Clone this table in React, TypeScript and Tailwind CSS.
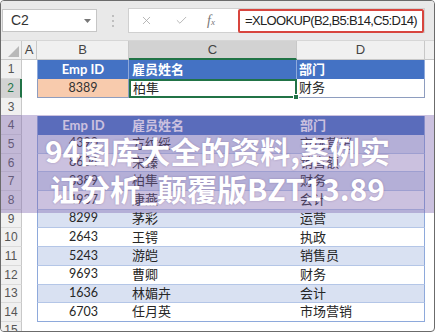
import { X, Check } from "lucide-react";

const rows = [
  ["4390", "方纹绥", "市场营销"],
  ["8604", "宋臻", "销售额"],
  ["8389", "柏隼", "财务"],
  ["4937", "康燕", "会计"],
  ["8299", "茅彩", "运营"],
  ["2643", "王锷", "执政"],
  ["5243", "游皑", "销售员"],
  ["9693", "曹卿", "财务"],
  ["1636", "林媚卉", "会计"],
  ["6703", "任月英", "市场营销"],
];

const RowNum = ({ n, selected = false }: { n: number; selected?: boolean }) =>
  selected ? (
    <div className="w-[21px] shrink-0 h-full flex items-center justify-center bg-[#d2d2d2] text-[#217346] border-r-2 border-r-[#217346] border-b border-b-[#d4d4d4] text-[12px] font-['Liberation_Sans',sans-serif]">
      {n}
    </div>
  ) : (
    <div className="w-[21px] shrink-0 h-full flex items-center justify-center bg-[#f0f0f0] text-[#555] border-r border-r-[#c8c8c8] border-b border-b-[#dadada] text-[12px] font-['Liberation_Sans',sans-serif]">
      {n}
    </div>
  );

const App = () => {
  return (
    <div className="w-[435px] h-[332px] relative overflow-hidden bg-white border border-[#6b6b6b] rounded-[4px] font-['Lato','Noto_Sans_CJK_SC',sans-serif] text-[#262626]">
      {/* formula bar */}
      <div className="h-[39px] flex items-center bg-[#e9e9e9] pl-[1px] pr-[9px]">
        <div className="w-[95px] h-[23px] bg-white border border-[#c6c6c6] flex items-center justify-between pl-[8px] pr-[5px]">
          <span className="text-[14px] text-[#333] font-['Liberation_Sans',sans-serif]">C2</span>
          <svg width="7" height="4" viewBox="0 0 7 4">
            <path d="M0 0h7L3.5 4z" fill="#777" />
          </svg>
        </div>
        <div className="w-[31px] flex justify-center">
          <svg width="2" height="12" viewBox="0 0 2 12">
            <circle cx="1" cy="1" r="0.9" fill="#aaa" />
            <circle cx="1" cy="6" r="0.9" fill="#aaa" />
            <circle cx="1" cy="11" r="0.9" fill="#aaa" />
          </svg>
        </div>
        <div className="flex-1 h-[25px] bg-white border border-[#d0d0d0] flex items-center">
          <div className="w-[109px] flex items-center pl-[11px] gap-[22px] text-[#a8a8a8]">
            <X size={13} strokeWidth={1.5} />
            <Check size={13} strokeWidth={1.5} />
            <span className="font-['Liberation_Serif',serif] italic text-[14px] text-[#777] leading-none -ml-[3px]">
              f<span className="text-[9px]">x</span>
            </span>
          </div>
          <div className="flex-1 h-[24px] border-2 border-[#d8453e] rounded-[2px] flex items-center pl-[5px] text-[13px] tracking-[-0.65px] text-[#222] font-['Liberation_Sans',sans-serif]">
            =XLOOKUP(B2,B5:B14,C5:D14)
          </div>
        </div>
      </div>

      {/* column headers */}
      <div className="flex h-[20px] bg-[#f0f0f0] border-t border-[#d6d6d6] text-[13px] text-[#444] font-['Liberation_Sans',sans-serif]">
        <div className="w-[21px] shrink-0 border-r border-b border-[#c8c8c8] flex items-end justify-end p-[2px]">
          <svg width="11" height="11" viewBox="0 0 11 11">
            <path d="M11 0V11H0z" fill="#b8b8b8" />
          </svg>
        </div>
        <div className="w-[15px] shrink-0 border-r border-b border-[#c8c8c8] flex items-center justify-center">A</div>
        <div className="w-[92px] shrink-0 border-r border-b border-[#c8c8c8] flex items-center justify-center">B</div>
        <div className="w-[168px] shrink-0 bg-[#d2d2d2] border-r border-r-[#c8c8c8] border-b-2 border-b-[#217346] flex items-center justify-center">C</div>
        <div className="w-[128px] shrink-0 border-r border-b border-[#c8c8c8] flex items-center justify-center">D</div>
        <div className="flex-1 border-b border-[#c8c8c8]" />
      </div>

      {/* row 1 */}
      <div className="flex h-[19px]">
        <RowNum n={1} />
        <div className="w-[15px] shrink-0" />
        <div className="w-[92px] shrink-0 bg-[#4472c4] border-l border-r border-[#8ea9db] flex items-center justify-center text-white font-bold text-[13px]">Emp ID</div>
        <div className="w-[168px] shrink-0 bg-[#4472c4] border-r border-[#8ea9db] flex items-center pl-[3px] text-white font-bold text-[13px]">雇员姓名</div>
        <div className="w-[128px] shrink-0 bg-[#4472c4] border-r border-[#8ea9db] flex items-center pl-[2px] text-white font-bold text-[13px]">部门</div>
        <div className="flex-1" />
      </div>

      {/* row 2 */}
      <div className="flex h-[19px]">
        <RowNum n={2} selected />
        <div className="w-[15px] shrink-0" />
        <div className="w-[92px] shrink-0 bg-[#f8cbad] border-l border-r border-b border-[#8e9dbf] flex items-center justify-center text-[12.5px] text-[#333]">8389</div>
        <div className="w-[168px] shrink-0 relative border-2 border-[#217346] flex items-center pl-[2px] text-[13px]">
          柏隼
          <div className="absolute -right-[4px] -bottom-[4px] w-[6px] h-[6px] bg-[#217346] border border-white" />
        </div>
        <div className="w-[128px] shrink-0 border-r border-b border-[#8e9dbf] flex items-center pl-[2px] text-[13px]">财务</div>
        <div className="flex-1" />
      </div>

      {/* row 3 */}
      <div className="flex h-[18px]">
        <RowNum n={3} />
        <div className="flex-1" />
      </div>

      {/* row 4 header */}
      <div className="flex h-[19px]">
        <RowNum n={4} />
        <div className="w-[15px] shrink-0" />
        <div className="w-[388px] shrink-0 flex bg-[#4472c4] border-x border-[#8ea9db] text-white font-bold text-[13px]">
          <span className="w-[91px] flex items-center justify-center">Emp ID</span>
          <span className="w-[168px] flex items-center pl-[3px]">雇员姓名</span>
          <span className="flex-1 flex items-center pl-[3px]">部门</span>
        </div>
        <div className="flex-1" />
      </div>

      {/* rows 5-14 */}
      {rows.map((r, i) => (
        <div key={i} className="flex h-[18.7px]">
          <RowNum n={i + 5} />
          <div className="w-[15px] shrink-0" />
          <div
            className={`w-[388px] shrink-0 flex border-x border-b border-x-[#8ea9db] ${
              i === rows.length - 1 ? "border-b-[#8ea9db]" : "border-b-[#b4c6e7]"
            } ${i % 2 === 0 ? "bg-[#d9e1f2]" : "bg-white"} text-[13px]`}
          >
            <span className="w-[91px] flex items-center justify-center text-[12.5px]">{r[0]}</span>
            <span className="w-[168px] flex items-center pl-[3px]">{r[1]}</span>
            <span className="flex-1 flex items-center pl-[3px]">{r[2]}</span>
          </div>
          <div className="flex-1" />
        </div>
      ))}

      {/* row 15 */}
      <div className="flex h-[18px]">
        <RowNum n={15} />
        <div className="flex-1" />
      </div>

      {/* watermark overlay */}
      <div className="absolute left-0 right-0 top-[114px] h-[98px] bg-[#7d64ae]/40 flex flex-col items-center pt-[16px] text-white font-bold text-[30px] leading-[38px] font-['Noto_Sans_CJK_SC',sans-serif] [text-shadow:0_0_2px_rgba(70,40,100,0.35)]">
        <div>94图库大全的资料,案例实</div>
        <div>证分析_颠覆版BZT13.89</div>
      </div>
    </div>
  );
};

export default App;
